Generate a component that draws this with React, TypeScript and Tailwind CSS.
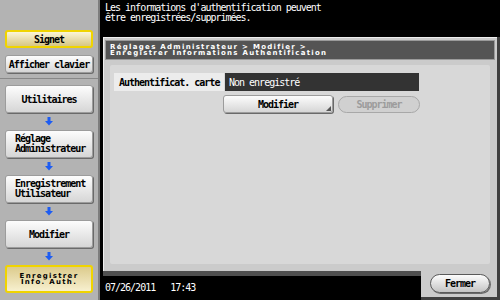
import React from "react";

const mono = "font-['DejaVu_Sans_Mono',monospace]";
const tiny = "font-['DejaVu_Sans',sans-serif] font-bold text-[7px] leading-[6px] tracking-[1.3px] whitespace-nowrap";

function Arrow() {
  return (
    <div className="h-[17px] flex items-center justify-center">
      <svg width="8" height="9" viewBox="0 0 8 9">
        <rect x="2.5" y="0" width="3" height="4" fill="#1d5cf2" />
        <polygon points="0,4 8,4 4,8.5" fill="#1d5cf2" />
      </svg>
    </div>
  );
}

const grayBtn =
  "bg-linear-to-b from-[#fdfdfd] to-[#d6d6d6] border border-[#9c9c9c] rounded-[3px] shadow-[1px_1px_0_#6a6a6a]";

export default function App() {
  return (
    <div className={`w-[500px] h-[300px] flex overflow-hidden bg-black ${mono}`}>
      {/* Sidebar */}
      <div className="w-[100px] h-full bg-[#b3b3b3] border-r-2 border-[#7d7d7d] flex flex-col shrink-0">
        <div className="h-[79px] border-b border-[#888] px-[5px] pt-[30px] flex flex-col gap-[7px]">
          <div className="h-[18px] flex items-center justify-center bg-linear-to-b from-[#fbf5d6] to-[#d7c784] border-2 border-[#f0d400] rounded-[3px] text-[10px] font-bold tracking-[-1px] text-black">
            Signet
          </div>
          <div className={`h-[18px] flex items-center justify-center ${grayBtn} text-[10px] font-bold tracking-[-1px] text-black`}>
            Afficher clavier
          </div>
        </div>
        <div className="px-[5px] pt-[6px] flex flex-col">
          <div className={`h-[28px] flex items-center justify-center ${grayBtn} text-[10px] font-bold tracking-[-1px] text-black`}>
            Utilitaires
          </div>
          <Arrow />
          <div className={`h-[28px] flex flex-col justify-center pl-[9px] ${grayBtn} text-[10px] leading-[10px] font-bold tracking-[-1px] text-black`}>
            <div>Réglage</div>
            <div>Administrateur</div>
          </div>
          <Arrow />
          <div className={`h-[28px] flex flex-col justify-center pl-[9px] ${grayBtn} text-[10px] leading-[10px] font-bold tracking-[-1px] text-black`}>
            <div>Enregistrement</div>
            <div>Utilisateur</div>
          </div>
          <Arrow />
          <div className={`h-[28px] flex items-center justify-center ${grayBtn} text-[10px] font-bold tracking-[-1px] text-black`}>
            Modifier
          </div>
          <Arrow />
          <div className="h-[28px] flex flex-col items-center justify-center bg-linear-to-b from-[#dccb8c] to-[#f7f0cf] border-2 border-[#f0d400] rounded-[3px] text-black">
            <div className={`${tiny} text-center`}>Enregistrer</div>
            <div className={`${tiny} text-center`}>Info. Auth.</div>
          </div>
        </div>
      </div>

      {/* Main */}
      <div className="flex-1 flex flex-col">
        <div className="h-[37px] pl-[5px] pt-[3px] text-white text-[10px] leading-[10px] tracking-[-1px]">
          <div>Les informations d'authentification peuvent</div>
          <div>être enregistrées/supprimées.</div>
        </div>
        <div className="flex-1 flex flex-col pl-[3px] border-r-[3px] border-[#404040]">
          {/* Frame */}
          <div className="h-[234px] bg-[#cbcbcb] border-t border-l border-[#eeeeee] pl-[1px] pr-[2px] pt-[2px] flex flex-col">
            <div className="h-[20px] bg-[#545454] border border-[#9a9a9a] pl-[4px] pt-[3px] text-white">
              <div className={tiny}>Réglages Administrateur &gt; Modifier &gt;</div>
              <div className={tiny}>Enregistrer Informations Authentification</div>
            </div>
            <div className="mx-[5px] mt-[5px] h-[199px] bg-[#d8d8d8] rounded-[2px] pl-[4px] pt-[8px]">
              <div className="flex h-[18px] gap-[1px]">
                <div className="w-[110px] bg-[#ececec] flex items-center pl-[5px] text-[10px] tracking-[-1px] font-bold text-black">
                  Authentificat. carte
                </div>
                <div className="w-[194px] bg-[#333] flex items-center pl-[4px] text-[10px] tracking-[-1px] text-white">
                  Non enregistré
                </div>
              </div>
              <div className="flex items-start mt-[4px] pl-[109px] gap-[5px]">
                <div className={`relative w-[110px] h-[18px] flex items-center justify-center ${grayBtn} text-[10px] font-bold tracking-[-1px] text-black`}>
                  Modifier
                  <svg className="absolute right-[1px] bottom-[1px]" width="5" height="5" viewBox="0 0 5 5">
                    <polygon points="5,0 5,5 0,5" fill="#555" />
                  </svg>
                </div>
                <div className="w-[82px] h-[17px] mt-[1px] flex items-center justify-center bg-[#d0d0d0] border border-[#a8a8a8] rounded-full text-[10px] font-bold tracking-[-1px] text-[#9c9c9c]">
                  Supprimer
                </div>
              </div>
            </div>
          </div>
          {/* Bottom row */}
          <div className="flex-1 flex">
            <div className="w-[318px] flex flex-col">
              <div className="h-[5px] bg-[#505050]" />
              <div className="flex-1 bg-black flex items-center pl-[2px] text-white text-[10px] tracking-[-1px] pb-[1px]">
                <span>07/26/2011</span>
                <span className="ml-[15px]">17:43</span>
              </div>
            </div>
            <div className="flex-1 bg-[#cbcbcb] border-b-[3px] border-[#404040] pl-[9px] pt-[3px]">
              <div className="w-[60px] h-[19px] flex items-center justify-center bg-linear-to-b from-[#fdfdfd] to-[#c4c4c4] border border-[#5a5a5a] rounded-full shadow-[1px_1px_0_#6a6a6a] text-[10px] font-bold tracking-[-1px] text-black">
                Fermer
              </div>
            </div>
          </div>
        </div>
      </div>
    </div>
  );
}
